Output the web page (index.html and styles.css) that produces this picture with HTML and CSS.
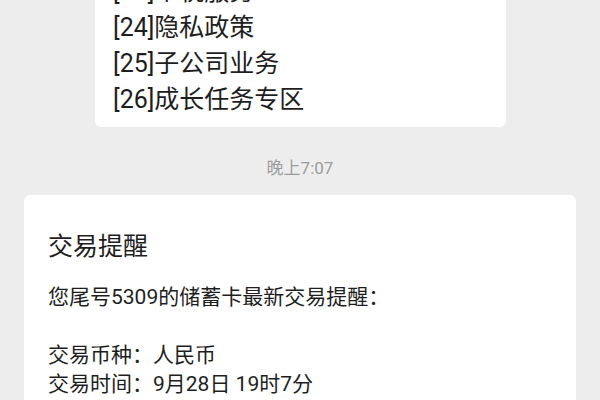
FILE: index.html
```html
<!DOCTYPE html>
<html lang="zh-CN">
<head>
<meta charset="utf-8">
<link rel="stylesheet" href="styles.css">
</head>
<body>
<div class="chat">
  <div class="bubble">
    <div class="menu-line">[23]个税服务</div>
    <div class="menu-line">[24]隐私政策</div>
    <div class="menu-line">[25]子公司业务</div>
    <div class="menu-line">[26]成长任务专区</div>
  </div>
  <div class="time">晚上7:07</div>
  <div class="card">
    <div class="card-title">交易提醒</div>
    <div class="card-body">
      <div class="line">您尾号5309的储蓄卡最新交易提醒：</div>
      <div class="line blank">&nbsp;</div>
      <div class="line">交易币种：人民币</div>
      <div class="line">交易时间：9月28日 19时7分</div>
      <div class="line">交易类型：转账汇款</div>
    </div>
  </div>
</div>
</body>
</html>
```

FILE: styles.css
```css
html, body {
  margin: 0;
  padding: 0;
  background: #ededed;
  width: 600px;
  height: 400px;
  overflow: hidden;
}
body {
  font-family: Roboto, "Noto Sans CJK SC", sans-serif;
  color: #1e1e1e;
}
.chat {
  display: flex;
  flex-direction: column;
  align-items: flex-start;
}
.bubble {
  margin-top: -36px;
  margin-left: 95px;
  width: 411px;
  box-sizing: border-box;
  background: #ffffff;
  border-radius: 6px;
  padding: 10px 18px 9px 18px;
}
.menu-line {
  font-size: 25px;
  line-height: 36px;
  white-space: nowrap;
}
.time {
  align-self: stretch;
  text-align: center;
  margin-top: 29px;
  font-size: 17px;
  line-height: 24px;
  color: #9c9c9c;
}
.card {
  margin-top: 15px;
  margin-left: 24px;
  width: 552px;
  box-sizing: border-box;
  background: #ffffff;
  border-radius: 6px;
  padding: 34px 24px 20px 24px;
}
.card-title {
  font-size: 25px;
  line-height: 35px;
}
.card-body {
  margin-top: 19px;
}
.line {
  font-size: 21px;
  line-height: 29px;
  white-space: nowrap;
}
```
